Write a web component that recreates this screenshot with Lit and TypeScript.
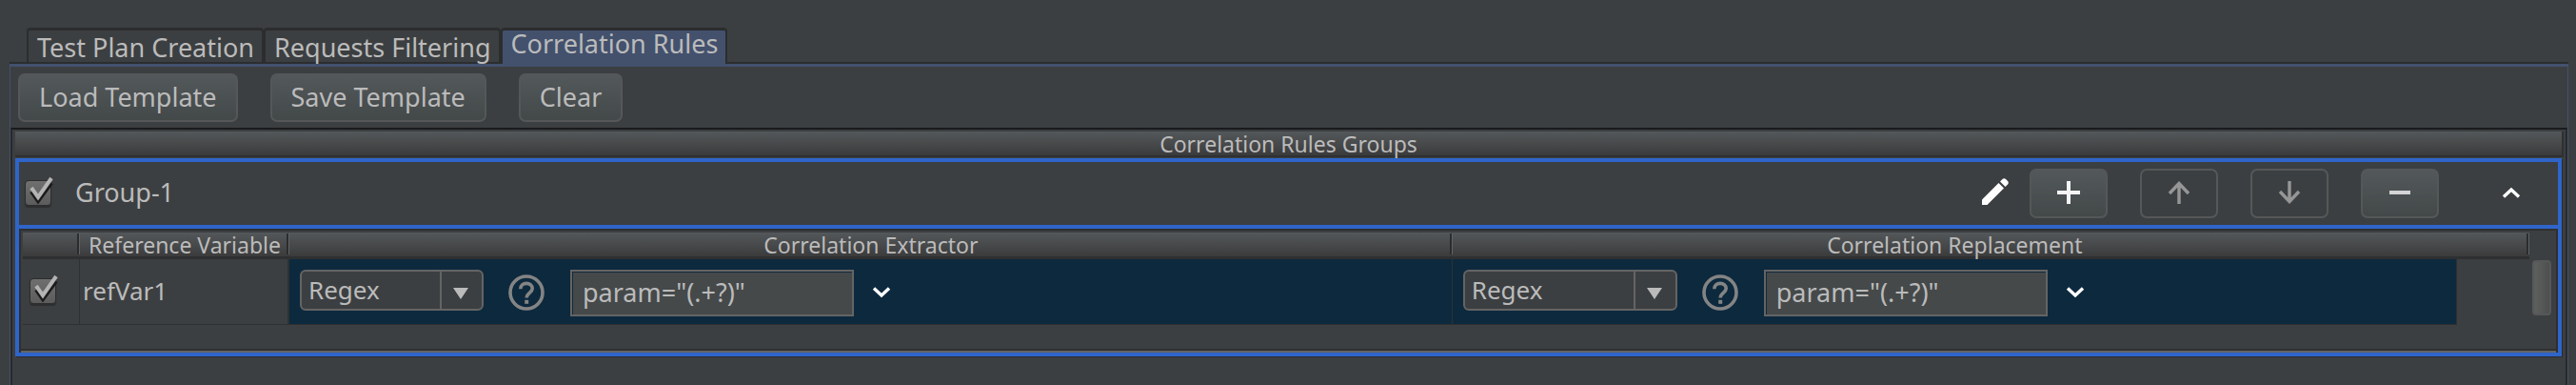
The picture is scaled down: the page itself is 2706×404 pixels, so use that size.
import { LitElement, html, css, svg } from "lit";
import { customElement, property, state } from "lit/decorators.js";
import { classMap } from "lit/directives/class-map.js";

const base = css`
  * {
    box-sizing: border-box;
  }
  button,
  select,
  input {
    font: inherit;
    color: inherit;
    margin: 0;
  }
  svg {
    display: block;
    flex: none;
  }
`;

@customElement("tick-box")
class TickBox extends LitElement {
  @property() label = "";

  static styles = [
    base,
    css`
      :host {
        display: block;
      }
      .tick {
        display: grid;
        width: 30px;
        height: 32px;
      }
      .box,
      .mark {
        grid-area: 1 / 1;
      }
      .box {
        appearance: none;
        align-self: end;
        width: 28px;
        height: 27px;
        margin-bottom: 1px;
        border: 1px solid #2b2d2e;
        border-radius: 4px;
        background: linear-gradient(#6f6f6f, #5c5c5c);
        box-shadow: 0 2px 1px #2c2e2f;
      }
      .mark {
        pointer-events: none;
        visibility: hidden;
      }
      .box:checked + .mark {
        visibility: visible;
      }
    `,
  ];

  render() {
    return html`<label class="tick">
      <input class="box" type="checkbox" checked aria-label=${this.label} />
      <svg class="mark" width="30" height="32" viewBox="0 0 30 32" fill="none" stroke-width="4">
        <path d="M7 16 L14 26 L28 7" stroke="#1c1c1c" />
        <path d="M7 12 L14 22 L28 2" stroke="#b4b4b4" />
      </svg>
    </label>`;
  }
}

@customElement("rule-part")
class RulePart extends LitElement {
  @property() label = "";
  @property({ type: Boolean }) wide = false;

  static styles = [
    base,
    css`
      :host {
        display: block;
      }
      .part {
        display: flex;
        align-items: flex-start;
        height: 68px;
        padding: 11px 11px 0;
      }
      .combo {
        display: grid;
        grid-template-columns: 1fr 46px;
        width: 193px;
        height: 43px;
      }
      .combo.wide {
        width: 225px;
      }
      .choice {
        grid-area: 1 / 1 / 2 / 3;
        appearance: none;
        padding: 0 0 1px 7px;
        border: 2px solid #646464;
        border-radius: 6px;
        background: #3c3f41;
        color: #bbbbbb;
        font-size: 26px;
      }
      .arrow {
        grid-area: 1 / 2;
        display: grid;
        place-items: center;
        padding: 6px 4px 0 0;
        margin: 2px 0;
        border-left: 2px solid #646464;
        pointer-events: none;
      }
      .help {
        margin: 5px 27px 0 26px;
      }
      .value {
        width: 298px;
        height: 49px;
        padding: 0 11px 3px;
        border: 2px solid #646464;
        background: #45494a;
        color: #bbbbbb;
        box-shadow: inset 1px 1px #12293b;
      }
      .expand {
        margin: 14px 0 0 17px;
        padding: 0;
        border: 0;
        background: none;
      }
    `,
  ];

  render() {
    return html`<div class="part">
      <div class=${classMap({ combo: true, wide: this.wide })}>
        <select class="choice" aria-label="${this.label} type">
          <option>Regex</option>
        </select>
        <span class="arrow">
          <svg width="16" height="12" viewBox="0 0 16 12"><path d="M0 0H16L8 12Z" fill="#bbbbbb" /></svg>
        </span>
      </div>
      <svg class="help" width="38" height="38" viewBox="0 0 38 38" fill="none" stroke="#848484" stroke-width="3.6">
        <circle cx="19" cy="19" r="17" />
        <path d="M12.8 15.3C12.8 11.5 15.6 9.4 19 9.4C22.6 9.4 25.2 11.7 25.2 14.8C25.2 19 19.2 19.2 19.2 24.6" />
        <path d="M19.2 26.8V30.8" stroke-width="4" />
      </svg>
      <input class="value" type="text" aria-label="${this.label} parameter" value=${'param="(.+?)"'} />
      <button class="expand" aria-label="Show ${this.label} options">
        <svg width="24" height="20" viewBox="0 0 24 20" fill="none" stroke="#fff" stroke-width="3.4">
          <path d="M4 5.5L12 13L20 5.5" />
        </svg>
      </button>
    </div>`;
  }
}

const icons = {
  add: svg`<path d="M12 0V24M0 12H24" stroke="#f4f4f4" stroke-width="4" />`,
  up: svg`<path d="M12 24V2M2 13L12 2.5L22 13" stroke="#969696" stroke-width="3.4" />`,
  down: svg`<path d="M12 0V22M2 11L12 21.5L22 11" stroke="#969696" stroke-width="3.4" />`,
  remove: svg`<path d="M1 12H23" stroke="#d4d4d4" stroke-width="4" />`,
};

@customElement("app-root")
class AppRoot extends LitElement {
  @state() private tab = 2;

  private tabs = ["Test Plan Creation", "Requests Filtering", "Correlation Rules"];
  private actions = [
    { name: "Add rule", icon: icons.add, off: false },
    { name: "Move group up", icon: icons.up, off: true },
    { name: "Move group down", icon: icons.down, off: true },
    { name: "Remove group", icon: icons.remove, off: false },
  ];

  static styles = [
    base,
    css`
      :host {
        display: flex;
        flex-direction: column;
        min-height: 100vh;
        box-sizing: border-box;
        padding: 29px 8px 0 10px;
        background: #3c3f41;
        color: #bbbbbb;
        font-family: "Noto Sans", "Open Sans", sans-serif;
        font-size: 27px;
      }
      .tabs {
        display: flex;
        padding-left: 18px;
        background: linear-gradient(#2b2d2e, #2b2d2e) bottom / 100% 2px no-repeat;
      }
      .tab {
        padding: 1px 8px 0 9px;
        border: 2px solid #2b2d2e;
        border-width: 3px 2px 0;
        border-radius: 4px 4px 0 0;
        background: none;
        line-height: 34px;
        white-space: nowrap;
      }
      .tab.on {
        padding-top: 0;
        padding-bottom: 7px;
        line-height: 28px;
        background: #43516d;
      }
      .panel {
        flex: 1;
        display: flex;
        flex-direction: column;
        border: 1px solid #43516d;
        border-top-width: 3px;
        border-bottom: 0;
      }
      .toolbar {
        display: flex;
        gap: 34px;
        padding: 7px 8px 6px;
      }
      .btn {
        display: grid;
        place-items: center;
        height: 51px;
        padding: 0 20px 2px;
        border: 2px solid #555758;
        border-radius: 7px;
        background: linear-gradient(#53585a, #434849);
        white-space: nowrap;
      }
      .groups {
        flex: 1;
        padding: 2px 4px 0 3px;
        border: 2px solid #28292b;
        border-top-color: #191a1b;
        border-bottom: 0;
      }
      .title {
        margin: 0 -2px 1px 0;
        padding-top: 1px;
        border-bottom: 2px solid #2e3031;
        border-right: 2px solid #2e3031;
        background: linear-gradient(#54585a, #3b3b3c);
        font-size: 23px;
        font-weight: 400;
        line-height: 24px;
        text-align: center;
      }
      .group {
        border: 4px solid #2f65ca;
        box-shadow: 1px 1px #2a2b2d;
      }
      .bar {
        display: flex;
        align-items: flex-start;
        height: 70px;
        padding: 7px 33px 0 6px;
        border-bottom: 4px solid #2f65ca;
      }
      .bar tick-box {
        margin-top: 8px;
      }
      .name {
        flex: 1;
        margin: 0 0 0 23px;
        font-size: 27px;
        font-weight: 400;
        line-height: 50px;
      }
      .plain {
        padding: 0;
        border: 0;
        background: none;
      }
      .edit {
        margin: 9px 21px 0 0;
      }
      .actions {
        display: flex;
        gap: 34px;
      }
      .icon {
        width: 82px;
        height: 52px;
        padding: 0 0 2px;
      }
      .icon:disabled {
        background: none;
      }
      .fold {
        margin: 16px 0 0 60px;
      }
      .scroller {
        position: relative;
        height: 130px;
        padding: 2px 6px 0 2px;
        border: 2px solid #2e3031;
        border-bottom: 0;
        box-shadow: inset 0 -2px #646464, inset 0 -4px #2e3031;
      }
      .rules {
        width: calc(100% - 22px);
        table-layout: fixed;
        border-collapse: separate;
        border-spacing: 0;
      }
      .c-tick {
        width: 60px;
      }
      .c-ref {
        width: 220px;
      }
      .c-ext {
        width: 46.4%;
      }
      .c-rest {
        width: 76px;
      }
      th {
        height: 28px;
        padding: 1px 0 0;
        border-bottom: 3px solid #2e3031;
        background: linear-gradient(#2b2c2d, #2b2c2d) right 1px top 1px / 2px 22px no-repeat,
          linear-gradient(#606365, #606365) right 0 top 1px / 1px 22px no-repeat,
          linear-gradient(#54585a, #3b3b3c);
        font-size: 23px;
        font-weight: 400;
        line-height: 24px;
        white-space: nowrap;
      }
      th.open {
        background: linear-gradient(#54585a, #3b3b3c);
      }
      td {
        height: 69px;
        padding: 0;
        border: solid #2e3031;
        border-width: 0 1px 1px 0;
      }
      td.picked {
        background: #0d293e;
      }
      td.rest {
        border: 0;
      }
      td tick-box {
        margin: -4px 0 0 7px;
      }
      td.ref {
        padding: 0 0 2px 3px;
        border-right-width: 2px;
        font-size: 26px;
      }
      .thumb {
        position: absolute;
        top: 31px;
        right: 5px;
        width: 20px;
        height: 58px;
        border: 2px solid #555758;
        border-radius: 4px;
        background: linear-gradient(90deg, #5e5f5f, #4e4f4f);
      }
    `,
  ];

  render() {
    return html`
      <div class="tabs" role="tablist">
        ${this.tabs.map(
          (t, i) => html`<button
            class=${classMap({ tab: true, on: i === this.tab })}
            role="tab"
            aria-selected=${i === this.tab}
            @click=${() => (this.tab = i)}
          >${t}</button>`
        )}
      </div>
      <main class="panel">
        <div class="toolbar">
          <button class="btn">Load Template</button>
          <button class="btn">Save Template</button>
          <button class="btn">Clear</button>
        </div>
        <section class="groups">
          <h1 class="title">Correlation Rules Groups</h1>
          <div class="group">
            <div class="bar">
              <tick-box label="Enable Group-1"></tick-box>
              <h2 class="name">Group-1</h2>
              <button class="plain edit" aria-label="Rename group">
                <svg width="30" height="30" viewBox="0 0 30 30" fill="#fff">
                  <path d="M1 23.5L18.5 6L24 11.5L6.5 29H1Z" />
                  <path d="M20 4.5L22.5 2C23.5 1 25 1 26 2L28 4C29 5 29 6.5 28 7.5L25.5 10Z" />
                </svg>
              </button>
              <div class="actions">
                ${this.actions.map(
                  (a) => html`<button class="btn icon" aria-label=${a.name} ?disabled=${a.off}>
                    <svg width="24" height="24" viewBox="0 0 24 24" fill="none">${a.icon}</svg>
                  </button>`
                )}
              </div>
              <button class="plain fold" aria-label="Collapse group">
                <svg width="32" height="20" viewBox="0 0 32 20" fill="none" stroke="#fff" stroke-width="3.4">
                  <path d="M8 13.5L16 6L24 13.5" />
                </svg>
              </button>
            </div>
            <div class="scroller">
              <table class="rules">
                <colgroup>
                  <col class="c-tick" /><col class="c-ref" /><col class="c-ext" /><col /><col class="c-rest" />
                </colgroup>
                <thead>
                  <tr>
                    <th></th>
                    <th>Reference Variable</th>
                    <th>Correlation Extractor</th>
                    <th class="open">Correlation Replacement</th>
                    <th></th>
                  </tr>
                </thead>
                <tbody>
                  <tr>
                    <td><tick-box label="Enable refVar1"></tick-box></td>
                    <td class="ref">refVar1</td>
                    <td class="picked"><rule-part label="Extractor"></rule-part></td>
                    <td class="picked"><rule-part label="Replacement" wide></rule-part></td>
                    <td class="rest"></td>
                  </tr>
                </tbody>
              </table>
              <div class="thumb"></div>
            </div>
          </div>
        </section>
      </main>
    `;
  }
}
